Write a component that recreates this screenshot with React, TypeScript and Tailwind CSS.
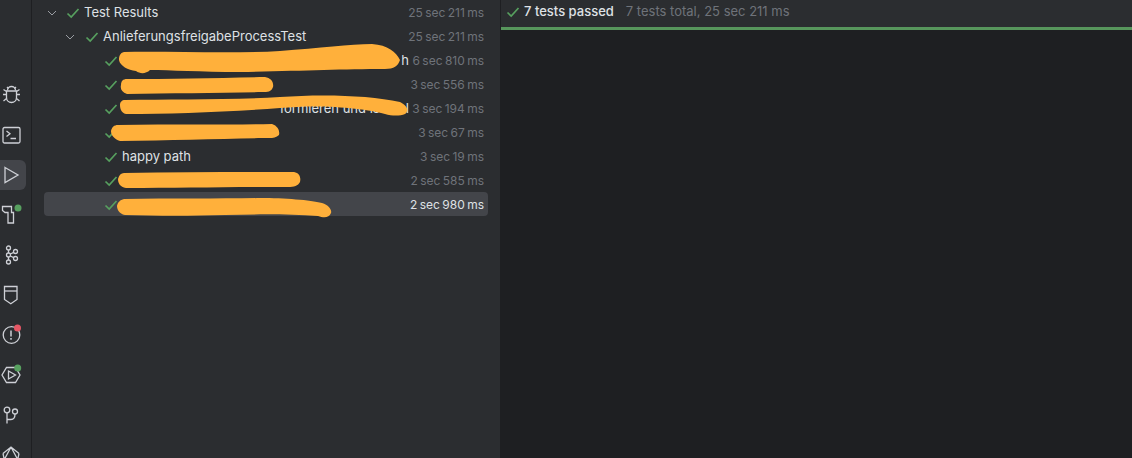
const Check = ({ className = "" }: { className?: string }) => (
  <svg width="14" height="14" viewBox="0 0 14 14" fill="none" className={`shrink-0 ${className}`}>
    <path d="M1.5 7.5 L5.2 11 L12.5 3" stroke="#57a05f" strokeWidth="1.7" />
  </svg>
);

const Chevron = () => (
  <svg width="10" height="10" viewBox="0 0 10 10" fill="none">
    <path d="M1 3 L5 7 L9 3" stroke="#9a9da3" strokeWidth="1" />
  </svg>
);

// only the bits of the names that the marker leaves visible
const rows = [
  { text: "h", time: "6 sec 810 ms", selected: false },
  { text: "", time: "3 sec 556 ms", selected: false },
  { text: "formieren und ist      l", time: "3 sec 194 ms", selected: false },
  { text: "", time: "3 sec 67 ms", selected: false },
  { text: "happy path", time: "3 sec 19 ms", selected: false },
  { text: "", time: "2 sec 585 ms", selected: false },
  { text: "", time: "2 sec 980 ms", selected: true },
];

const RailIcon = ({ children, active = false }: { children: React.ReactNode; active?: boolean }) => (
  <div className="flex h-10 items-center">
    <div className={`flex h-[30px] w-[26px] items-center rounded-r-md ${active ? "bg-[#43454a]" : ""}`}>
      <svg width="22" height="22" viewBox="0 0 22 22" fill="none" stroke="#ced0d6" strokeWidth="1.3" className="overflow-visible">
        {children}
      </svg>
    </div>
  </div>
);

export default function App() {
  return (
    <div className="flex h-[458px] w-[1132px] overflow-hidden bg-[#2b2d30] font-['Inter','Liberation_Sans',sans-serif] text-[13px]">
      {/* tool window bar */}
      <div className="h-full w-[32px] shrink-0 overflow-hidden border-r border-[#1e1f22] pt-[75px]">
        <RailIcon>
          <path d="M7.5 6.5C7.5 4 9.5 2.5 11.5 2.5S15.5 4 15.5 6.5" />
          <path d="M6.5 7h10v6.5c0 3-2.2 5-5 5s-5-2-5-5z" />
          <path d="M7 3l1.5 1.5M16 3l-1.5 1.5M6.5 10.5H3M16.5 10.5H20M6.5 14.5L3.5 17M16.5 14.5l3 2.5M6.5 7.5L3.5 5.5M16.5 7.5l3-2" />
        </RailIcon>
        <RailIcon>
          <rect x="3" y="3.5" width="17" height="15.5" rx="1.5" />
          <path d="M6.5 7l3.5 2.8-3.5 2.8M10.5 14.5h5.5" />
        </RailIcon>
        <RailIcon active>
          <path d="M5 3.5 L18 11 L5 18.5 Z" />
        </RailIcon>
        <RailIcon>
          <path d="M2.5 2.5H11.5V8.5H13.5V19H8V8.5H5L2.5 6.5Z" />
          <circle cx="18" cy="4" r="3.5" fill="#57a05f" stroke="none" />
        </RailIcon>
        <RailIcon>
          <circle cx="8.5" cy="4" r="2" />
          <circle cx="8.5" cy="11" r="2" />
          <circle cx="8.5" cy="18" r="2" />
          <circle cx="15.5" cy="7.5" r="2" />
          <circle cx="15.5" cy="14.5" r="2" />
          <path d="M8.5 6v3M8.5 13v3M10.3 10l3.5-1.7M10.3 12l3.5 1.7" />
        </RailIcon>
        <RailIcon>
          <path d="M4.5 2.5h12.5v13l-6.2 4.3-6.3-4.3z" />
          <path d="M4.5 7h12.5" />
        </RailIcon>
        <RailIcon>
          <circle cx="11.5" cy="11" r="8.3" />
          <path d="M11 6.5v6M11 14v1.8" strokeWidth="1.5" />
          <circle cx="17.5" cy="4" r="3.5" fill="#e55765" stroke="none" />
        </RailIcon>
        <RailIcon>
          <path d="M6.5 3.5h9l4.5 7.5-4.5 7.5h-9L2 11z" />
          <path d="M8.5 7l7 4-7 4z" />
          <circle cx="17.7" cy="4" r="3.5" fill="#57a05f" stroke="none" />
        </RailIcon>
        <RailIcon>
          <circle cx="7" cy="6" r="2.8" />
          <circle cx="15" cy="7.5" r="2.5" />
          <path d="M7 8.8V19.5M7 15.5h4c3 0 4-2 4-5.5" />
        </RailIcon>
        <RailIcon>
          <path d="M11 3L3 18M11 3l8 15M3 9.5l8-6.5 8 6.5M3 9.5l2 9.5h12l2-9.5" />
        </RailIcon>
      </div>

      {/* test tree */}
      <div className="relative w-[468px] shrink-0 px-3">
        <div className="flex h-6 items-center justify-between pr-[4px] pt-[2px]">
          <div className="flex items-center">
            <span className="ml-[3px] mr-[9px]"><Chevron /></span>
            <Check className="mr-[3px]" />
            <span className="ml-px text-[#dfe1e5]">Test Results</span>
          </div>
          <span className="whitespace-nowrap text-[12px] text-[#6f737a] [word-spacing:-1px]">25 sec 211 ms</span>
        </div>
        <div className="flex h-6 items-center justify-between pr-[4px] pt-[2px]">
          <div className="flex items-center">
            <span className="ml-[21px] mr-[10px]"><Chevron /></span>
            <Check className="mr-[4px]" />
            <span className="text-[#dfe1e5]">AnlieferungsfreigabeProcessTest</span>
          </div>
          <span className="whitespace-nowrap text-[12px] text-[#6f737a] [word-spacing:-1px]">25 sec 211 ms</span>
        </div>
        {rows.map((row) => (
          <div
            key={row.time}
            className={`flex h-6 items-center justify-between rounded pr-[4px] pt-[2px] ${row.selected ? "bg-[#43454a]" : ""}`}
          >
            <div className="flex items-center">
              <Check className="ml-[60px] mr-[4px]" />
              <span className={`whitespace-pre text-[#dfe1e5] ${row.text === "happy path" ? "" : "w-[287px] text-right"}`}>
                {row.text}
              </span>
            </div>
            <span className={`whitespace-nowrap text-[12px] [word-spacing:-1px] ${row.selected ? "text-[#dfe1e5]" : "text-[#6f737a]"}`}>{row.time}</span>
          </div>
        ))}

        {/* marker scribbles painted over the names */}
        <svg width="468" height="240" viewBox="32 0 468 240" className="pointer-events-none absolute left-0 top-0" fill="#ffb03b">
          <path d="M124 52 C170 51 230 54 280 51 C320 48 350 44 372 44 C388 45 396 52 400 60 C398 66 394 69 385 69 C340 69 300 71 240 72 C200 72 170 70 150 70 C146 74 140 74 136 71 C128 70 120 66 119 60 C119 56 120 53 124 52Z" />
          <path d="M127 79 C170 79 220 78 265 77 C271 78 274 82 273 87 C271 92 268 92 262 92 C220 93 170 93 127 94 C122 92 120 89 121 85 C121 81 123 79 127 79Z" />
          <path d="M125 100 C170 99 230 100 280 97 C320 94 370 95 400 102 C408 106 409 111 405 114 C400 116 392 116 385 114 C365 108 320 104 280 108 C230 112 170 114 126 114 C121 113 120 108 120 105 C120 102 122 100 125 100Z" />
          <path d="M118 125 C170 124 230 125 272 124 C278 126 280 131 279 135 C275 139 270 138 262 138 C220 139 170 140 120 141 C114 139 111 135 111 131 C112 127 114 125 118 125Z" />
          <path d="M124 173 C180 172 240 172 294 172 C300 173 301 178 300 182 C298 186 294 187 288 187 C230 187 180 188 126 188 C120 187 118 183 118 179 C119 175 121 173 124 173Z" />
          <path d="M124 199 C170 198 220 199 260 198 C285 198 310 200 322 203 C329 205 332 210 331 213 C329 218 324 218 318 216 C290 214 260 214 225 215 C190 216 160 216 125 215 C119 214 117 209 117 206 C118 202 120 200 124 199Z" />
        </svg>
      </div>

      {/* result pane */}
      <div className="flex min-w-0 flex-1 flex-col border-l border-[#1e1f22]">
        <div className="flex h-[27px] items-center pb-[3px] pl-[5px]">
          <Check className="mr-[4px]" />
          <span className="font-medium text-[#dfe1e5]">7 tests passed</span>
          <span className="ml-3 text-[#6f737a]">7 tests total, 25 sec 211 ms</span>
        </div>
        <div className="h-[3px] bg-[#57965c]" />
        <div className="flex-1 bg-[#1e1f22]" />
      </div>
    </div>
  );
}
